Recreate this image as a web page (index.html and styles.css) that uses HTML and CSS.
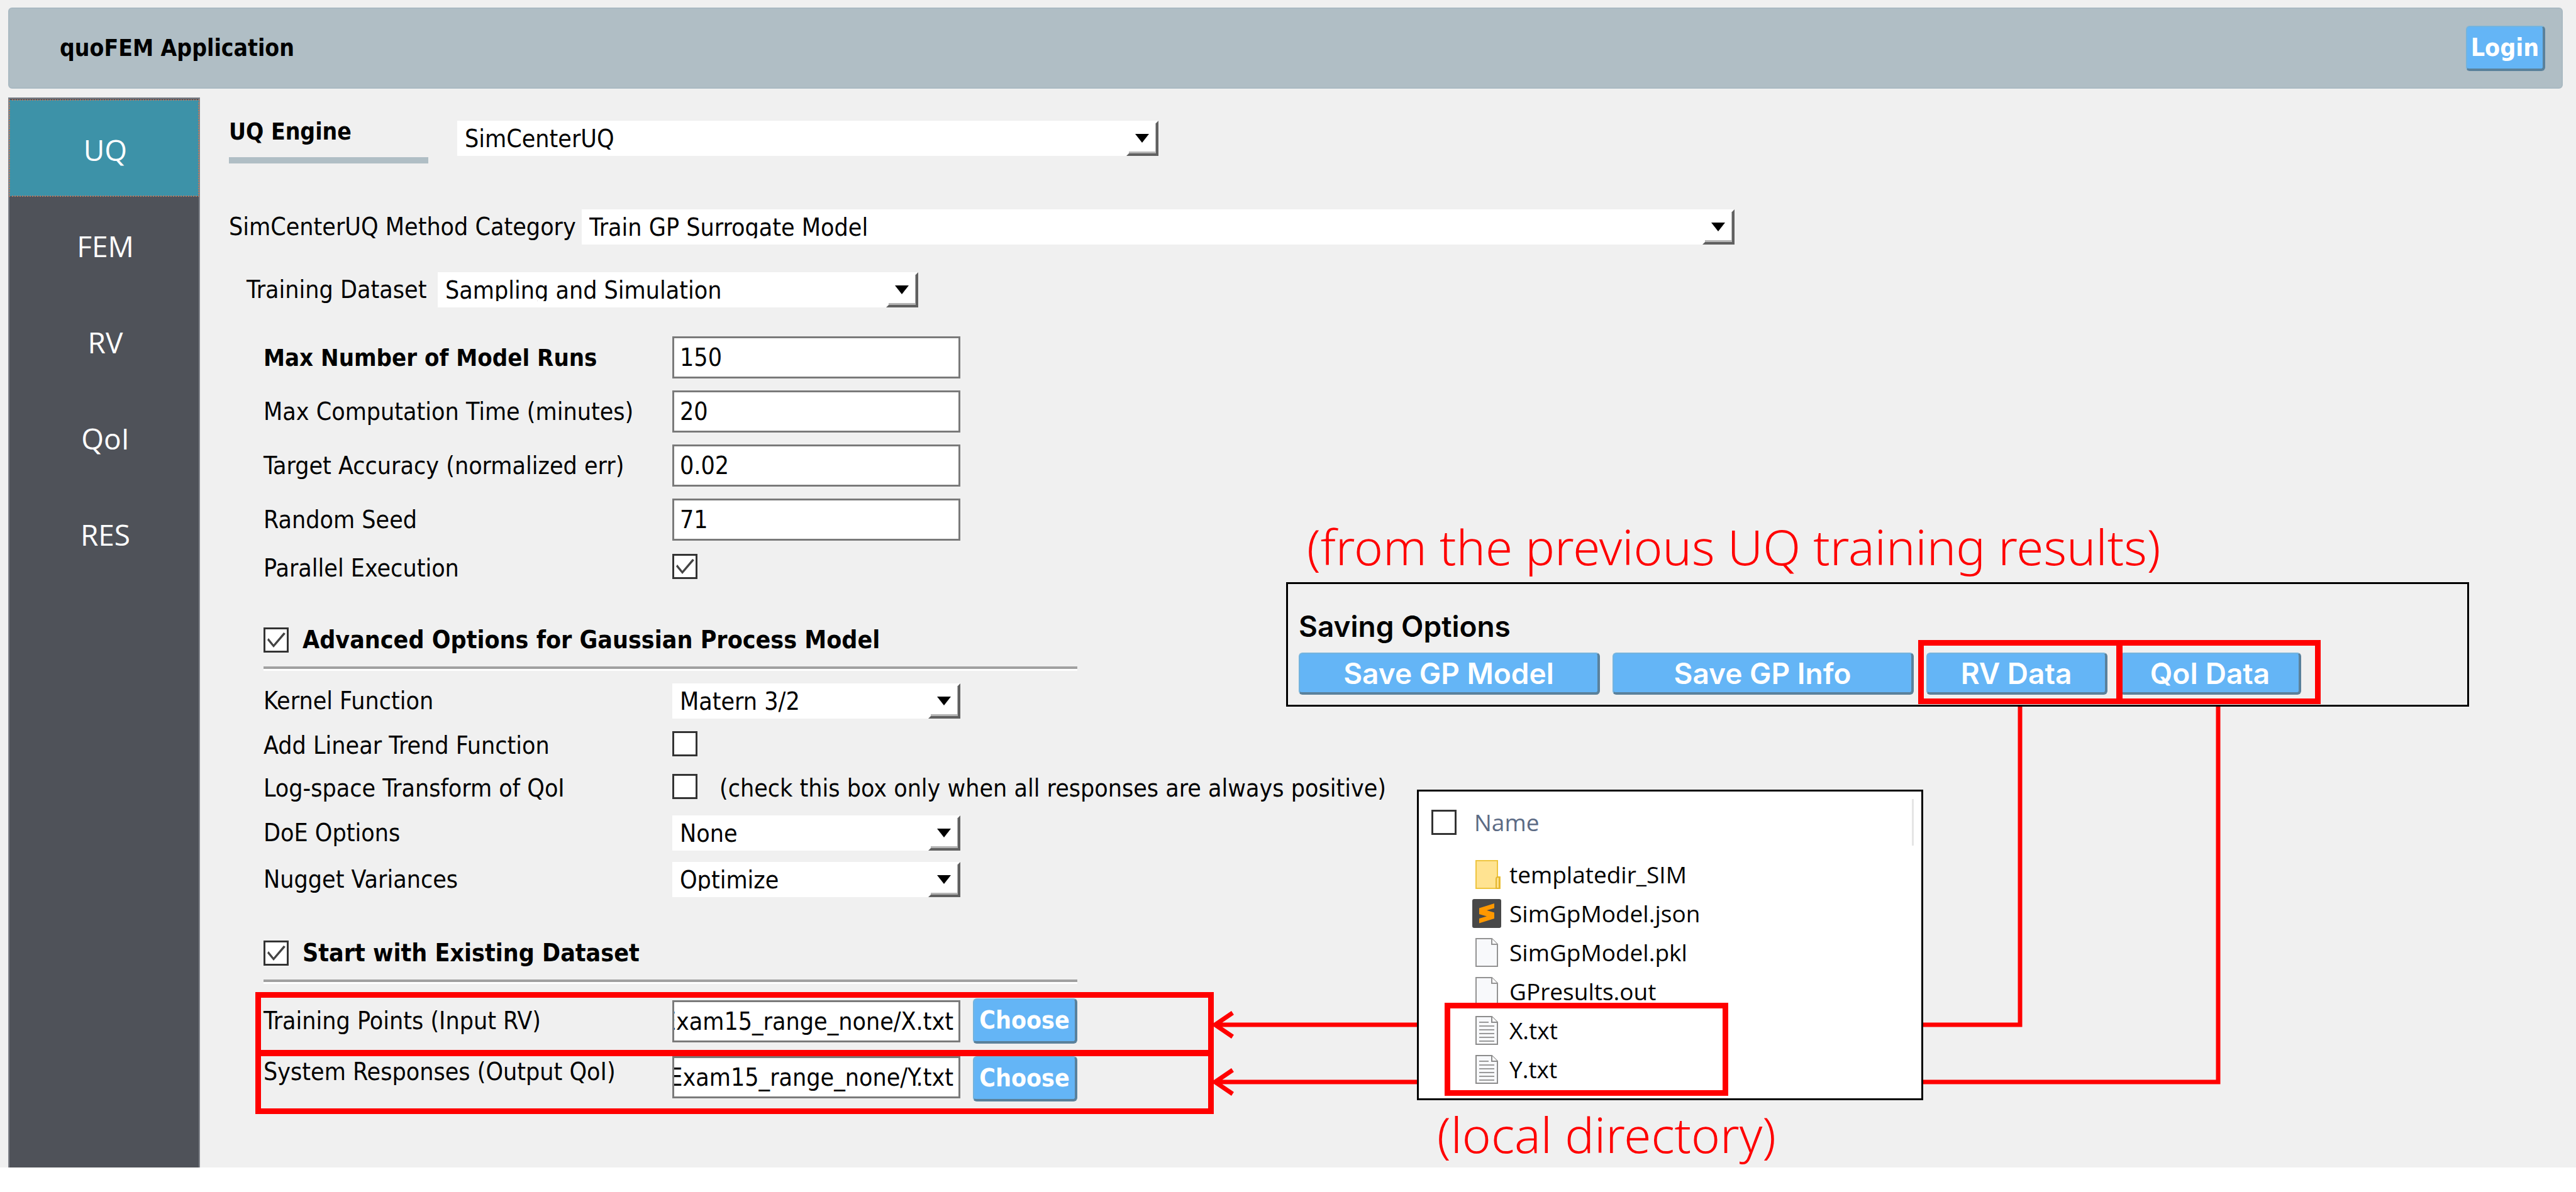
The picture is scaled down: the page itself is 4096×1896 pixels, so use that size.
FILE: index.html
```
<!DOCTYPE html>
<html lang="en">
<head>
<meta charset="utf-8">
<title>quoFEM Application</title>
<link rel="stylesheet" href="styles.css">
</head>
<body>
<div class="app">
  <header class="header">
    <h1 class="header-title">quoFEM Application</h1>
    <button class="btn btn-login" type="button">Login</button>
  </header>

  <div class="workspace">
    <nav class="tabs" aria-label="Sections">
      <button class="tab tab-active" type="button">UQ</button>
      <button class="tab" type="button">FEM</button>
      <button class="tab" type="button">RV</button>
      <button class="tab" type="button">QoI</button>
      <button class="tab" type="button">RES</button>
    </nav>

    <main class="panel">
      <div class="row row-engine">
        <label class="engine-title" for="engine">UQ Engine</label>
        <span class="combo combo-engine"><select id="engine"><option>SimCenterUQ</option></select></span>
      </div>
      <div class="row row-method">
        <label class="label-method" for="method">SimCenterUQ Method Category</label>
        <span class="combo combo-method"><select id="method"><option>Train GP Surrogate Model</option></select></span>
      </div>
      <div class="row row-training">
        <label class="label-training" for="training">Training Dataset</label>
        <span class="combo combo-training"><select id="training"><option>Sampling and Simulation</option></select></span>
      </div>

      <div class="fields">
        <label class="strong" for="runs">Max Number of Model Runs</label>
        <input class="text" id="runs" type="text" value="150">
        <label for="time">Max Computation Time (minutes)</label>
        <input class="text" id="time" type="text" value="20">
        <label for="accuracy">Target Accuracy (normalized err)</label>
        <input class="text" id="accuracy" type="text" value="0.02">
        <label for="seed">Random Seed</label>
        <input class="text" id="seed" type="text" value="71">
        <label for="parallel">Parallel Execution</label>
        <span class="check-cell"><input class="check" id="parallel" type="checkbox" checked></span>
      </div>

      <div class="section-head">
        <input class="check" id="advanced" type="checkbox" checked>
        <label for="advanced">Advanced Options for Gaussian Process Model</label>
      </div>
      <div class="fields fields-advanced">
        <label for="kernel">Kernel Function</label>
        <span class="combo"><select id="kernel"><option>Matern 3/2</option></select></span>
        <label for="trend">Add Linear Trend Function</label>
        <span class="check-cell"><input class="check" id="trend" type="checkbox"></span>
        <label for="logspace">Log-space Transform of QoI</label>
        <span class="check-cell"><input class="check" id="logspace" type="checkbox"><span class="note">(check this box only when all responses are always positive)</span></span>
        <label for="doe">DoE Options</label>
        <span class="combo"><select id="doe"><option>None</option></select></span>
        <label for="nugget">Nugget Variances</label>
        <span class="combo"><select id="nugget"><option>Optimize</option></select></span>
      </div>

      <div class="section-head">
        <input class="check" id="existing" type="checkbox" checked>
        <label for="existing">Start with Existing Dataset</label>
      </div>
      <div class="files">
        <label for="points">Training Points (Input RV)</label>
        <input class="text text-path" id="points" type="text" value="Exam15_range_none/X.txt">
        <button class="btn" type="button">Choose</button>
        <label class="label-top" for="responses">System Responses (Output QoI)</label>
        <input class="text text-path text-top" id="responses" type="text" value="Exam15_range_none/Y.txt">
        <button class="btn" type="button">Choose</button>
      </div>
    </main>
  </div>

  <!-- callouts drawn over the form -->
  <svg class="arrows" viewBox="0 0 1604 624" aria-hidden="true">
    <path d="M1284 0V510H4M1599 0V601H4M32 491L4 510L32 529M32 582L4 601L32 620"/>
  </svg>

  <p class="caption caption-results">(from the previous UQ training results)</p>
  <section class="saving">
    <h2 class="saving-title">Saving Options</h2>
    <div class="saving-buttons">
      <button class="btn btn-wide" type="button">Save GP Model</button>
      <button class="btn btn-wide" type="button">Save GP Info</button>
      <button class="btn btn-data" type="button">RV Data</button>
      <button class="btn btn-data" type="button">QoI Data</button>
    </div>
  </section>

  <section class="directory">
    <div class="dir-head">
      <input class="check" id="all" type="checkbox">
      <label class="dir-name" for="all">Name</label>
      <span class="dir-divider"></span>
    </div>
    <ul class="dir-list">
      <li class="dir-item">
        <svg class="icon" viewBox="0 0 48 48"><path d="M7 2H41V28H45V46H7Z" fill="#ffe391" stroke="#eec53f" stroke-width="2"/><path d="M39 46V31Q39 28 42 28H44V46Z" fill="#ffe08a" stroke="#e3b52e" stroke-width="2"/></svg>
        templatedir_SIM</li>
      <li class="dir-item">
        <svg class="icon" viewBox="0 0 48 48"><rect x="1" y="1" width="46" height="46" rx="3" fill="#484848"/><path d="M36 8L12 15.500V25L24 28.500L12 32V39.500L36 32V22.500L24 19L36 15.500Z" fill="#ff9800"/></svg>
        SimGpModel.json</li>
      <li class="dir-item">
        <svg class="icon" viewBox="0 0 48 48"><path d="M7 2H32L41 11V46H7Z" fill="#f8f9fb" stroke="#939393" stroke-width="2"/><path d="M32 2V11H41" fill="#fff" stroke="#939393" stroke-width="2"/></svg>
        SimGpModel.pkl</li>
      <li class="dir-item">
        <svg class="icon" viewBox="0 0 48 48"><path d="M7 2H32L41 11V46H7Z" fill="#f8f9fb" stroke="#939393" stroke-width="2"/><path d="M32 2V11H41" fill="#fff" stroke="#939393" stroke-width="2"/></svg>
        GPresults.out</li>
      <li class="dir-item">
        <svg class="icon" viewBox="0 0 48 48"><path d="M7 2H32L41 11V46H7Z" fill="#f8f9fb" stroke="#8c8c8c" stroke-width="2"/><path d="M32 2V11H41" fill="#fff" stroke="#8c8c8c" stroke-width="2"/><path d="M12 11H27M12 17H36M12 23H36M12 29H36M12 35H36M12 41H36" stroke="#9a9a9a" stroke-width="2"/></svg>
        X.txt</li>
      <li class="dir-item">
        <svg class="icon" viewBox="0 0 48 48"><path d="M7 2H32L41 11V46H7Z" fill="#f8f9fb" stroke="#8c8c8c" stroke-width="2"/><path d="M32 2V11H41" fill="#fff" stroke="#8c8c8c" stroke-width="2"/><path d="M12 11H27M12 17H36M12 23H36M12 29H36M12 35H36M12 41H36" stroke="#9a9a9a" stroke-width="2"/></svg>
        Y.txt</li>
    </ul>
  </section>
  <p class="caption caption-directory">(local directory)</p>

  <div class="mark mark-points"></div>
  <div class="mark mark-responses"></div>
  <div class="mark mark-rv"></div>
  <div class="mark mark-qoi"></div>
  <div class="mark mark-txt"></div>
</div>
</body>
</html>
```
FILE: styles.css
```
*, *::before, *::after { box-sizing: border-box; }

body {
  margin: 0;
  background: #fff;
  color: #000;
  font: 39px/50px "DejaVu Sans Condensed", "DejaVu Sans", sans-serif;
}

button, input, select { font: inherit; color: inherit; margin: 0; }
h1, h2, p, ul { margin: 0; padding: 0; font-weight: normal; list-style: none; }

.app {
  position: relative;
  display: flex;
  flex-direction: column;
  gap: 14px;
  min-height: calc(100vh - 39px);
  padding: 12px 21px 0 13px;
  background: #f0f0f0;
}

.header {
  display: flex;
  align-items: center;
  justify-content: space-between;
  height: 129px;
  padding: 0 26px 0 80px;
  border: 2px solid #a9b9c2;
  border-radius: 6px;
  background: #b0bec5;
}
.header-title { font-size: 37px; font-weight: bold; }

.btn {
  height: 72px;
  padding: 0;
  border: solid;
  border-width: 2px 4px 4px 2px;
  border-color: #74b4de #5a819b #5a819b #74b4de;
  border-radius: 6px;
  background: #64b5f6;
  color: #fff;
  font-weight: bold;
}
.btn-login { width: 126px; }

.workspace { display: flex; flex: 1; }

.tabs {
  display: flex;
  flex-direction: column;
  width: 305px;
  padding-top: 2px;
  border: solid #7f8289;
  border-width: 2px 2px 0;
  background: #4f5259;
}
.tab {
  height: 153px;
  padding: 5px 0 0 4px;
  border: 0;
  background: none;
  color: #fff;
  font: 46px/50px "Open Sans", sans-serif;
}
.tab-active { background: #3d92a8; outline: 2px dotted #b57a62; outline-offset: -1px; }

.panel { flex: 1; padding: 30px 0 0 46px; }

.row { display: flex; align-items: center; }
.row-engine { align-items: flex-start; }
.row-method { margin-top: 73px; }
.row-training { margin-top: 44px; padding-left: 28px; }
.engine-title {
  width: 317px;
  height: 75px;
  margin-right: 46px;
  border-bottom: 10px solid #b0bec5;
  font-size: 37px;
  font-weight: bold;
}
.label-method { width: 561px; }
.label-training { width: 304px; }

.combo { position: relative; display: block; height: 56px; background: #fff; }
.combo select {
  display: block;
  width: 100%;
  height: 56px;
  padding: 12px 60px 10px 12px;
  border: 0;
  appearance: none;
  background: none;
  line-height: 34px;
}
.combo::before {
  content: "";
  position: absolute;
  top: 21px;
  right: 15px;
  width: 22px;
  height: 14px;
  background: #000;
  clip-path: polygon(0 0, 100% 0, 50% 100%);
}
.combo::after {
  content: "";
  position: absolute;
  top: 0;
  right: 0;
  width: 51px;
  height: 56px;
  border: 4px solid transparent;
  border-right-color: #606060;
  border-bottom-color: #606060;
  box-shadow: inset -1px -3px #b4b4b4;
  pointer-events: none;
}
.combo-engine { width: 1115px; margin-top: 7px; }
.combo-method { width: 1833px; }
.combo-training { width: 764px; }

.fields {
  display: grid;
  grid-template-columns: 650px 458px;
  gap: 19px 0;
  align-items: center;
  margin: 46px 0 0 55px;
}
.fields-advanced { gap: 18px 0; margin-top: 23px; }

.strong { font-size: 38px; font-weight: bold; }

.text {
  width: 458px;
  height: 67px;
  padding: 0 9px;
  border: 3px solid #7a7a7a;
  background: #fff;
}
.text-path { padding: 0 8px 0 0; direction: rtl; }

.check-cell { display: flex; align-items: center; height: 49px; }
.check-cell .check { margin-bottom: 6px; }
.check {
  flex: none;
  width: 40px;
  height: 40px;
  border: 3px solid #333;
  appearance: none;
  background: #fff;
}
.check:checked::after {
  content: "";
  display: block;
  width: 34px;
  height: 34px;
  background: #444;
  clip-path: polygon(3px 17px, 5px 14px, 13px 24px, 29px 5px, 32px 7px, 13px 29px);
}
.note { margin-left: 35px; white-space: nowrap; }

.section-head {
  display: flex;
  align-items: center;
  gap: 22px;
  width: 1294px;
  height: 71px;
  margin: 64px 0 0 55px;
  padding-bottom: 17px;
  border-bottom: 4px solid #a0a0a0;
  box-shadow: 0 3px #fff;
  font-weight: bold;
}

.files {
  display: grid;
  grid-template-columns: 650px 458px 166px;
  column-gap: 0;
  row-gap: 20px;
  align-items: center;
  margin: 26px 0 0 55px;
}
.files .btn { margin-left: 20px; width: 166px; }
.label-top, .text-top { align-self: start; }

.arrows {
  position: absolute;
  left: 1928px;
  top: 1120px;
  width: 1604px;
  height: 624px;
  fill: none;
  stroke: #f00;
  stroke-width: 7px;
}

.caption {
  position: absolute;
  color: #f00;
  font: 300 78px/100px "Noto Sans", sans-serif;
  white-space: nowrap;
}
.caption-results { left: 2078px; top: 819px; }
.caption-directory { left: 2285px; top: 1754px; }

.saving {
  position: absolute;
  left: 2045px;
  top: 926px;
  width: 1881px;
  height: 198px;
  padding: 39px 17px 0;
  border: 3px solid #000;
  background: #f0f0f0;
  font: 600 46px/56px Inter, sans-serif;
}
.saving-title { font: inherit; margin-bottom: 14px; }
.saving-buttons { display: flex; gap: 20px; }
.saving .btn { height: 67px; font-weight: 600; }
.btn-wide { width: 479px; }
.btn-data { width: 288px; }

.directory {
  position: absolute;
  left: 2253px;
  top: 1256px;
  width: 805px;
  height: 494px;
  border: 3px solid #000;
  background: #fff;
  font: 37px/50px "Open Sans", sans-serif;
}
.dir-head { display: flex; align-items: center; height: 98px; padding: 12px 12px 12px 20px; }
.dir-name { margin-left: 28px; color: #5c6b85; }
.dir-divider { width: 3px; height: 74px; margin-left: auto; background: #e5e5e5; }
.dir-list { padding: 3px 0 0 84px; }
.dir-item { display: flex; align-items: center; gap: 12px; height: 62px; }
.icon { width: 48px; height: 48px; }

.mark { position: absolute; border: 9px solid #f00; }
.mark-points, .mark-responses { left: 406px; width: 1524px; height: 102px; }
.mark-points { top: 1578px; }
.mark-responses { top: 1670px; }
.mark-rv, .mark-qoi { top: 1018px; width: 325px; height: 102px; }
.mark-rv { left: 3050px; }
.mark-qoi { left: 3365px; }
.mark-txt { left: 2297px; top: 1595px; width: 451px; height: 148px; }
```
